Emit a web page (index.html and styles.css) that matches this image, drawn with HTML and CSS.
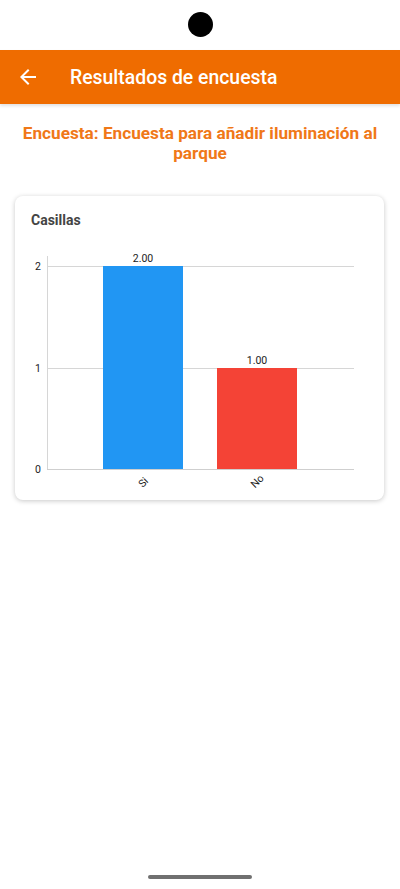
FILE: index.html
```html
<!DOCTYPE html>
<html lang="es">
<head>
<meta charset="utf-8">
<title>Resultados de encuesta</title>
<link rel="stylesheet" href="styles.css">
</head>
<body>
<div class="screen">
  <div class="statusbar"><span class="camera"></span></div>
  <header class="appbar">
    <svg class="back" width="24" height="24" viewBox="0 0 24 24"><path d="M20 11H7.83l5.59-5.59L12 4l-8 8 8 8 1.41-1.41L7.83 13H20v-2z" fill="#fff"/></svg>
    <h1 class="appbar-title">Resultados de encuesta</h1>
  </header>
  <main class="content">
    <h2 class="survey-title">Encuesta: Encuesta para añadir iluminación al parque</h2>
    <section class="card">
      <h3 class="card-title">Casillas</h3>
      <svg class="chart" width="369" height="264" viewBox="0 0 369 264">
        <g stroke="#d6d6d6" stroke-width="1">
          <line x1="32" y1="30.5" x2="339" y2="30.5"/>
          <line x1="32" y1="132.5" x2="339" y2="132.5"/>
          <line x1="32.5" y1="20" x2="32.5" y2="233"/>
        </g>
        <rect x="88" y="30" width="80" height="203" fill="#2196F3"/>
        <rect x="202" y="132" width="80" height="101" fill="#F44336"/>
        <line x1="32" y1="233.5" x2="339" y2="233.5" stroke="#cfcfcf" stroke-width="1"/>
        <g class="vals" text-anchor="middle">
          <text x="128" y="26">2.00</text>
          <text x="242" y="128">1.00</text>
        </g>
        <g class="ylab" text-anchor="end">
          <text x="26" y="34">2</text>
          <text x="26" y="136">1</text>
          <text x="26" y="237">0</text>
        </g>
        <g class="xlab" text-anchor="middle">
          <text x="128" y="250" transform="rotate(-45 128 246)">Si</text>
          <text x="242" y="249" transform="rotate(-45 242 245)">No</text>
        </g>
      </svg>
    </section>
  </main>
  <div class="home"></div>
</div>
</body>
</html>
```
FILE: styles.css
```css
* { box-sizing: border-box; }
html, body { margin: 0; padding: 0; background: #fff; }
body { font-family: Roboto, "Noto Sans", Arial, sans-serif; }
.screen { width: 400px; height: 889px; display: flex; flex-direction: column; position: relative; overflow: hidden; }
.statusbar { height: 50px; display: flex; justify-content: center; align-items: flex-start; padding-top: 12px; background: #fff; }
.camera { width: 25px; height: 25px; border-radius: 50%; background: #000; }
.appbar { height: 54px; background: #EF6C00; display: flex; align-items: center; padding-left: 16px; box-shadow: 0 2px 3px rgba(0,0,0,0.12); position: relative; z-index: 1; }
.back { display: block; margin-right: 30px; }
.appbar-title { margin: 0; color: #fff; font-size: 19.4px; font-weight: 500; }
.content { flex: 1; display: flex; flex-direction: column; }
.survey-title { margin: 19px 18px 0; text-align: center; color: #F07818; font-size: 17.2px; line-height: 20px; font-weight: 700; }
.card { margin: 33px 16px 0 15px; background: #fff; border-radius: 8px; box-shadow: 0 1px 5px rgba(0,0,0,0.22); height: 304px; }
.card-title { margin: 0; padding: 16px 16px 0; line-height: 16px; height: 40px; font-size: 14px; font-weight: 700; color: #444; }
.chart { display: block; }
.chart text { font-family: Roboto, "Noto Sans", Arial, sans-serif; font-size: 10.5px; fill: #222; }
.home { position: absolute; left: 148px; top: 875px; width: 104px; height: 4px; border-radius: 2px; background: #707070; }
```
